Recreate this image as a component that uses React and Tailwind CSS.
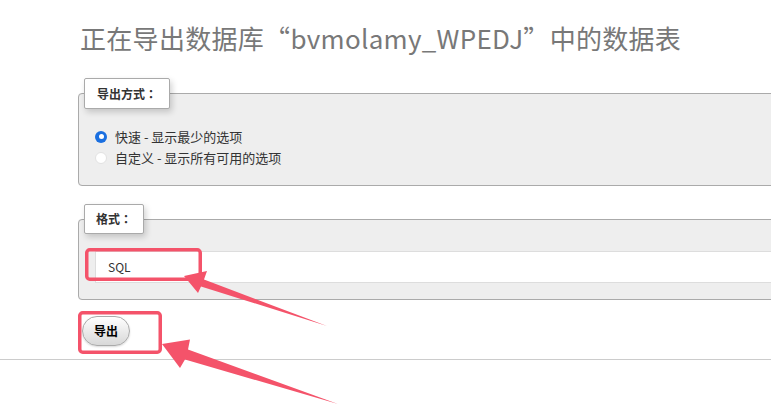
export default function App() {
  return (
    <div className="relative h-[409px] w-[771px] overflow-hidden bg-white font-['Noto_Sans_CJK_SC','Noto_Sans',sans-serif] text-[#333]">
      <div className="pl-[78px]">
        <h2 className="pl-[2px] pt-[18px] text-[26px] font-normal leading-[40px] tracking-[0.3px] text-[#787878]">
          正在导出数据库“bvmolamy_WPEDJ”中的数据表
        </h2>

        <fieldset className="mt-[20px] w-[720px] rounded-[4px] border border-[#aaa] bg-[#eee]">
          <legend className="ml-[5px] rounded-[2px] border border-[#aaa] bg-white pl-3 pr-[12px] text-[12px] font-bold leading-[29px] text-[#333] shadow-[2px_3px_6px_rgba(0,0,0,0.18)]">
            导出方式<span className="font-['Noto_Sans_CJK_JP']">：</span>
          </legend>
          <div className="px-4 pb-[17px] pt-[17px] text-[13px]">
            <label className="flex h-[21px] items-center">
              <span className="flex h-[12px] w-[12px] items-center justify-center rounded-full bg-[#1a6fe0]">
                <span className="h-[5px] w-[5px] rounded-full bg-white" />
              </span>
              <span className="ml-[8px]">快速 - 显示最少的选项</span>
            </label>
            <label className="flex h-[21px] items-center">
              <span className="h-[12px] w-[12px] rounded-full border border-[#e2e2e2] bg-white" />
              <span className="ml-[8px]">自定义 - 显示所有可用的选项</span>
            </label>
          </div>
        </fieldset>

        <fieldset className="mt-[18px] w-[720px] rounded-[4px] border border-[#aaa] bg-[#eee]">
          <legend className="ml-[5px] rounded-[2px] border border-[#aaa] bg-white pl-[11px] pr-[11px] text-[12px] font-bold leading-[28px] text-[#333] shadow-[2px_3px_6px_rgba(0,0,0,0.18)]">
            格式<span className="font-['Noto_Sans_CJK_JP']">：</span>
          </legend>
          <div className="pb-[16px] pl-[16px] pt-[17px]">
            <div className="flex h-[32px] items-center border border-[#ddd] bg-white pl-[12px] text-[12px] text-[#333]">
              SQL
            </div>
          </div>
        </fieldset>

        <button className="ml-[4px] mt-[16px] h-[30px] rounded-full border border-[#aaa] bg-gradient-to-b from-white to-[#d8d8d8] px-[11px] text-[12px] font-bold text-black shadow-[0_1px_2px_rgba(0,0,0,0.15)]">
          导出
        </button>
      </div>

      <div className="mt-[13px] border-t border-[#ccc]" />

      <svg className="pointer-events-none absolute inset-0" width="771" height="409" viewBox="0 0 771 409">
        <rect x="86.75" y="249.75" width="113.5" height="29.5" rx="3" fill="none" stroke="#f4536a" strokeWidth="3.5" />
        <rect x="79.75" y="312.75" width="80.5" height="39.5" rx="3" fill="none" stroke="#f4536a" strokeWidth="3.5" />
        <polygon points="184,276 207,271 204,279.5 327,326 201,286.5 198,293" fill="#f4536a" />
        <polygon points="162,344 190,339.5 188,349.5 338,404 185,359.5 180,368" fill="#f4536a" />
      </svg>
    </div>
  );
}
